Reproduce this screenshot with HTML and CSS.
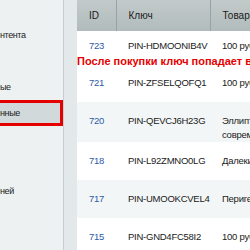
FILE: index.html
```html
<!DOCTYPE html>
<html lang="ru">
<head>
    <meta charset="UTF-8">
    <title>Ключи</title>
    <link rel="stylesheet" href="styles.css">
</head>
<body>
    <div class="page">
        <div class="sidebar">
            <div class="menu-item">нтента</div>
            <div class="menu-item"></div>
            <div class="menu-item">ые</div>
            <div class="menu-item active">нные</div>
            <div class="menu-item"></div>
            <div class="menu-item"></div>
            <div class="menu-item">ней</div>
        </div>

        <div class="content">
            <table class="keys">
                <thead>
                    <tr>
                        <th class="col-id">ID</th>
                        <th class="col-key">Ключ</th>
                        <th class="col-item">Товар</th>
                    </tr>
                </thead>
                <tbody>
                    <tr class="first">
                        <td><a href="#">723</a></td>
                        <td>PIN-HDMOONIB4V</td>
                        <td>100 рублей</td>
                    </tr>
                    <tr>
                        <td><a href="#">721</a></td>
                        <td>PIN-ZFSELQOFQ1</td>
                        <td>100 рублей</td>
                    </tr>
                    <tr class="odd">
                        <td><a href="#">720</a></td>
                        <td>PIN-QEVCJ6H23G</td>
                        <td>Эллиптический<br>современный</td>
                    </tr>
                    <tr>
                        <td><a href="#">718</a></td>
                        <td>PIN-L92ZMNO0LG</td>
                        <td>Далекий</td>
                    </tr>
                    <tr class="odd">
                        <td><a href="#">717</a></td>
                        <td>PIN-UMOOKCVEL4</td>
                        <td>Перигей</td>
                    </tr>
                    <tr>
                        <td><a href="#">715</a></td>
                        <td>PIN-GND4FC58I2</td>
                        <td>100 рублей</td>
                    </tr>
                </tbody>
            </table>

            <div class="notice">После покупки ключ попадает в раздел</div>
        </div>
    </div>
</body>
</html>
```

FILE: styles.css
```css
body {
    margin: 0;
    font-family: "Liberation Sans", Arial, sans-serif;
    background-color: #e3e9ea;
    overflow: hidden;
}
.page {
    display: flex;
    height: 250px;
}
.sidebar {
    width: 63px;
    flex-shrink: 0;
    padding-top: 22px;
    background-color: #edf1f2;
    border-right: 1px solid #c3ced2;
    overflow: hidden;
}
.menu-item {
    height: 26px;
    line-height: 26px;
    font-size: 9px;
    letter-spacing: -0.4px;
    color: #1c1c1c;
    white-space: nowrap;
}
.menu-item.active {
    background-color: #d2d9db;
    border: 3px solid #e40000;
    border-left: none;
    line-height: 20px;
    box-sizing: border-box;
}
.content {
    position: relative;
    flex: 1;
    min-width: 0;
    padding-left: 13px;
    overflow: hidden;
}
.keys {
    table-layout: fixed;
    width: 320px;
    border-collapse: collapse;
    background-color: #fff;
    font-size: 9.5px;
    letter-spacing: -0.25px;
    white-space: nowrap;
}
.keys th,
.keys td {
    box-sizing: border-box;
    padding-left: 12px;
    padding-right: 0;
    text-align: left;
    overflow: hidden;
}
.keys th {
    height: 31px;
    padding-top: 0;
    padding-bottom: 0;
    font-weight: normal;
    font-size: 10px;
    letter-spacing: 0;
    color: #1a1a1a;
    background: linear-gradient(#c2caca, #b1bbbb);
    border-right: 1px solid #98a3a3;
}
.col-id { width: 39px; }
.col-key { width: 94px; }
.col-item { width: 187px; }
.keys td {
    height: 38px;
    padding-top: 12px;
    padding-bottom: 0;
    vertical-align: top;
    color: #1a1a1a;
    line-height: 14px;
}
.keys tr.first td {
    height: 33px;
    padding-top: 8px;
}
.keys tr.odd td {
    background-color: #f3f6f6;
}
.keys a {
    color: #2d5ba8;
    text-decoration: none;
}
.notice {
    position: absolute;
    left: 13px;
    top: 55px;
    font-size: 11px;
    font-weight: bold;
    color: #e60000;
    white-space: nowrap;
}
```
